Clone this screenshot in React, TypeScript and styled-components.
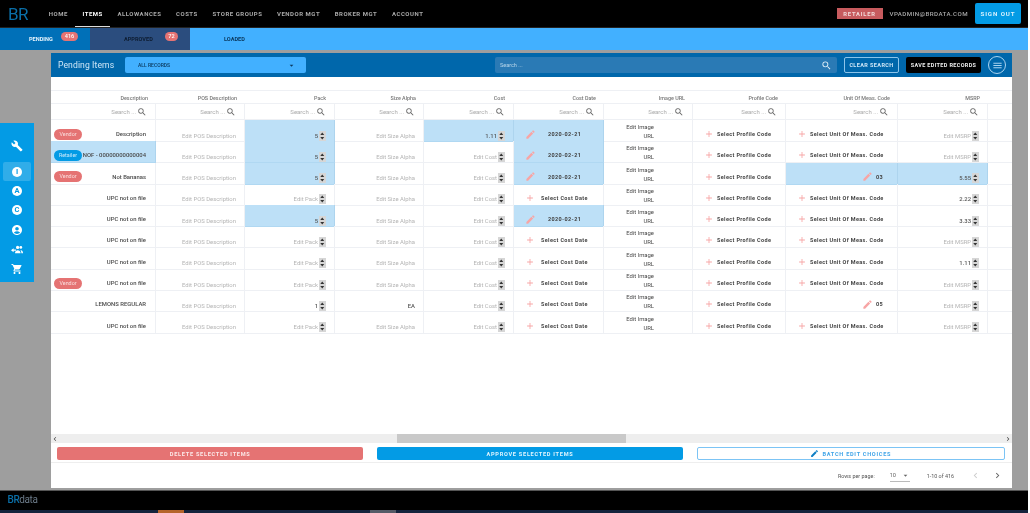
import React from "react";
import styled, { createGlobalStyle } from "styled-components";
import { MdBuild, MdAccountCircle, MdShoppingCart, MdSearch, MdEdit, MdAdd, MdArrowDropDown, MdChevronLeft, MdChevronRight, MdMenu } from "react-icons/md";

const Global = createGlobalStyle`
  html, body { margin: 0; padding: 0; background: #fff; }
  body { font-family: Roboto, "Liberation Sans", sans-serif; width: 1030px; height: 513px; overflow: hidden; }
  * { box-sizing: border-box; }
`;

const Shell = styled.div`
  width: 1028px;
  height: 513px;
  display: flex;
  flex-direction: column;
  background: #9e9e9e;
  filter: blur(0.3px);
`;

const TopBar = styled.header`
  height: 28px;
  flex: none;
  background: #000;
  display: flex;
  align-items: center;
  padding: 0 7px 0 8px;
  border-bottom: 1px solid #222;
`;
const Logo = styled.div`
  font-size: 17px;
  line-height: 20px;
  color: #0a6fa8;
  width: 33.5px;
  letter-spacing: -0.5px;
  font-weight: 400;
`;
const NavItem = styled.div<{ $active?: boolean }>`
  height: 27px;
  display: flex;
  align-items: center;
  padding: 0 7.3px;
  font-size: 6px;
  font-weight: 700;
  letter-spacing: 0.52px;
  white-space: nowrap;
  color: ${(p) => (p.$active ? "#fff" : "#a9a9a9")};
  box-shadow: ${(p) => (p.$active ? "inset 0 -1px 0 #ddd" : "none")};
`;
const Spacer = styled.div`
  flex: 1;
`;
const RoleTag = styled.div`
  width: 46px;
  height: 11px;
  background: #c75b5e;
  color: #f2dada;
  font-size: 5.8px;
  font-weight: 700;
  letter-spacing: 0.8px;
  display: flex;
  align-items: center;
  justify-content: center;
`;
const Email = styled.div`
  margin: 0 7px;
  font-size: 6.2px;
  font-weight: 500;
  letter-spacing: 0.4px;
  color: #a9a9a9;
`;
const SignOut = styled.button`
  width: 46px;
  height: 21px;
  border: 0;
  border-radius: 2px;
  padding: 0;
  background: #039be5;
  color: #d8f1fd;
  font-family: inherit;
  font-size: 6.2px;
  font-weight: 700;
  letter-spacing: 0.9px;
`;

const TabBar = styled.nav`
  height: 22px;
  flex: none;
  display: flex;
  background: #42b0ff;
`;
const Tab = styled.div<{ $w: number; $bg: string; $fg: string; $pad: number }>`
  position: relative;
  width: ${(p) => p.$w}px;
  background: ${(p) => p.$bg};
  color: ${(p) => p.$fg};
  padding-left: ${(p) => p.$pad}px;
  font-size: 5.6px;
  font-weight: 700;
  line-height: 22px;
`;
const TabCount = styled.span<{ $left: number; $w: number }>`
  position: absolute;
  top: 4px;
  left: ${(p) => p.$left}px;
  width: ${(p) => p.$w}px;
  height: 9px;
  border-radius: 5px;
  background: #e57373;
  color: #fff;
  font-size: 5.6px;
  font-weight: 500;
  line-height: 9px;
  text-align: center;
`;

const Main = styled.main`
  flex: 1;
  min-height: 0;
  display: flex;
  align-items: flex-start;
  padding: 3px 16px 2px 0;
`;
const SideBar = styled.aside`
  width: 34px;
  height: 159px;
  margin: 70px 17px 0 0;
  flex: none;
  background: #039be5;
  display: flex;
  flex-direction: column;
  align-items: center;
  padding-top: 13px;
  color: #fff;
`;
const SideItem = styled.div<{ $active?: boolean }>`
  width: 28px;
  height: 19.4px;
  flex: none;
  display: flex;
  align-items: center;
  justify-content: center;
  border-radius: 2px;
  background: ${(p) => (p.$active ? "rgba(255,255,255,.18)" : "transparent")};
`;
const SideTool = styled(SideItem)`
  margin-bottom: 6.5px;
`;
const LetterDot = styled.span`
  width: 10px;
  height: 10px;
  border-radius: 50%;
  background: #fff;
  color: #039be5;
  font-size: 7.5px;
  font-weight: 700;
  line-height: 10px;
  text-align: center;
`;

const Panel = styled.section`
  width: 961px;
  height: 435px;
  flex: none;
  background: #fff;
  display: flex;
  flex-direction: column;
`;
const PanelHead = styled.div`
  height: 24px;
  flex: none;
  background: #0067ab;
  display: flex;
  align-items: center;
  padding: 0 6px 0 7px;
`;
const Title = styled.h1`
  margin: 0;
  width: 67px;
  font-size: 8.6px;
  font-weight: 400;
  letter-spacing: 0.1px;
  color: #cfe7f7;
  white-space: nowrap;
`;
const RecordSelect = styled.div`
  width: 181px;
  height: 16px;
  background: #42b0ff;
  border-radius: 2px;
  display: flex;
  align-items: center;
  justify-content: space-between;
  padding: 0 10px 0 13px;
  font-size: 5px;
  font-weight: 500;
  color: #0b3a60;
`;
const GlobalSearch = styled.div`
  width: 342px;
  height: 16px;
  margin-left: 189px;
  background: #2a7ab5;
  border-radius: 2px;
  display: flex;
  align-items: center;
  justify-content: space-between;
  padding: 0 5px;
  font-size: 5.5px;
  color: #b8d6ea;
`;
const ClearBtn = styled.button`
  width: 55px;
  height: 16px;
  margin-left: 7px;
  padding: 0;
  background: transparent;
  border: 1px solid #8cc4ea;
  border-radius: 2px;
  color: #cfe7f7;
  font-family: inherit;
  font-size: 5.5px;
  font-weight: 700;
  letter-spacing: 0.4px;
`;
const SaveBtn = styled.button`
  width: 75px;
  height: 16px;
  margin-left: 7px;
  padding: 0;
  background: #000;
  border: 0;
  border-radius: 2px;
  color: #eee;
  font-family: inherit;
  font-size: 5.5px;
  font-weight: 700;
  letter-spacing: 0.35px;
`;
const MenuBtn = styled.div`
  width: 18px;
  height: 18px;
  margin-left: 7px;
  border: 1px solid #a9d3ef;
  border-radius: 50%;
  display: flex;
  align-items: center;
  justify-content: center;
  color: #a9d3ef;
`;

const TableArea = styled.div`
  flex: none;
  height: 357px;
  padding-top: 13px;
`;
const COLS = "105px 89px 90px 89px 90px 90px 89px 93px 112px 90px 24px";
const HeadRow = styled.div`
  display: grid;
  grid-template-columns: ${COLS};
  height: 14px;
  border-top: 1px solid #eef0f4;
  border-bottom: 1px solid #eef0f4;
`;
const HeadCell = styled.div<{ $pad: number }>`
  font-size: 5.4px;
  font-weight: 500;
  line-height: 14px;
  color: #777;
  text-align: right;
  padding-right: ${(p) => p.$pad}px;
  white-space: nowrap;
`;
const SearchRow = styled.div`
  display: grid;
  grid-template-columns: ${COLS};
  height: 16px;
  border-bottom: 1px solid #eef0f4;
`;
const SearchCell = styled.div`
  display: flex;
  align-items: center;
  justify-content: flex-end;
  gap: 1px;
  padding-right: 8px;
  font-size: 6px;
  color: #aaa;
  border-right: 1px solid #eef0f4;
  white-space: nowrap;
  svg { color: #666; }
  &:last-child { border-right: 0; }
`;
const DataRow = styled.div`
  display: grid;
  grid-template-columns: ${COLS};
  height: 21.3px;
`;
const Cell = styled.div<{ $hi?: boolean }>`
  display: flex;
  align-items: flex-end;
  justify-content: flex-end;
  padding-bottom: 0.5px;
  min-width: 0;
  background: ${(p) => (p.$hi ? "#bde0f7" : "transparent")};
  border-right: 1px solid ${(p) => (p.$hi ? "#add4ee" : "#eef0f4")};
  border-bottom: 1px solid ${(p) => (p.$hi ? "#b0d8f2" : "#eef0f4")};
  white-space: nowrap;
  &:last-child { border-right: 0; }
`;
const DescCell = styled(Cell)`
  justify-content: space-between;
  align-items: center;
  padding: 7px 9px 0 3px;
`;
const Badge = styled.span<{ $kind: "Vendor" | "Retailer" }>`
  flex: none;
  width: 28px;
  height: 11px;
  border-radius: 6px;
  background: ${(p) => (p.$kind === "Vendor" ? "#e57373" : "#039be5")};
  color: ${(p) => (p.$kind === "Vendor" ? "#f9dede" : "#cbeafb")};
  font-size: 5.4px;
  line-height: 11px;
  text-align: center;
`;
const DescText = styled.span`
  margin-left: auto;
  font-size: 5.9px;
  font-weight: 500;
  color: #4a4a4a;
`;
const Ghost = styled.span<{ $pad: number }>`
  font-size: 5.9px;
  color: #b4b4b4;
  padding-right: ${(p) => p.$pad}px;
  line-height: 9px;
`;
const Value = styled.span<{ $pad?: number }>`
  font-size: 5.9px;
  color: #555;
  font-weight: 500;
  padding-right: ${(p) => p.$pad ?? 0}px;
  line-height: 9px;
`;
const Spin = styled.svg`
  flex: none;
  width: 6.5px;
  height: 10px;
  margin: 0 8.5px 0 1px;
  background: #d6d6d6;
`;
const PickCell = styled(Cell)<{ $left: number }>`
  justify-content: flex-start;
  align-items: center;
  padding: 7px 0 0 ${(p) => p.$left}px;
  font-size: 5.5px;
  font-weight: 700;
  letter-spacing: 0.36px;
  color: #444;
  svg { color: #f7a5a5; flex: none; }
`;
const PickLabel = styled.span<{ $gap: number }>`
  margin-left: ${(p) => p.$gap}px;
`;
const ImageCell = styled(Cell)`
  display: block;
  padding: 3px 38px 0 0;
  font-size: 5.9px;
  line-height: 9px;
  color: #4a4a4a;
  text-align: right;
`;

const HScroll = styled.div`
  height: 9px;
  flex: none;
  background: #eee;
  display: flex;
  align-items: center;
  justify-content: space-between;
  color: #444;
`;
const Thumb = styled.div`
  width: 229px;
  height: 9px;
  margin-right: 40px;
  background: #c9c9c9;
`;
const ActionRow = styled.div`
  height: 20px;
  flex: none;
  display: flex;
  align-items: flex-start;
  gap: 13.5px;
  padding: 4px 7px 0 6px;
  border-bottom: 1px solid #eee;
`;
const ActionBtn = styled.button<{ $bg: string; $fg: string; $border?: string }>`
  flex: 1;
  height: 13px;
  padding: 0;
  border: ${(p) => (p.$border ? `1px solid ${p.$border}` : "0")};
  border-radius: 2px;
  background: ${(p) => p.$bg};
  color: ${(p) => p.$fg};
  font-family: inherit;
  font-size: 5.6px;
  font-weight: 700;
  letter-spacing: 0.72px;
  display: flex;
  align-items: center;
  justify-content: center;
  gap: 3px;
`;
const Pager = styled.div`
  flex: none;
  height: 25px;
  display: flex;
  align-items: center;
  justify-content: flex-end;
  padding: 0 9px 0 0;
  font-size: 5.4px;
  color: #555;
`;
const PageSize = styled.div`
  width: 20px;
  height: 13px;
  margin: 0 17px 0 15px;
  display: flex;
  align-items: center;
  justify-content: space-between;
  border-bottom: 1px solid #bbb;
  color: #666;
  font-size: 5.6px;
`;
const PageIcons = styled.div`
  display: flex;
  gap: 11px;
  margin-left: 16px;
`;

const Footer = styled.footer`
  height: 23px;
  flex: none;
  background: #000;
  display: flex;
  flex-direction: column;
  border-top: 1px solid #555;
`;
const FooterLogo = styled.div`
  flex: 1;
  padding: 3px 0 0 7.5px;
  font-size: 10px;
  line-height: 12px;
  letter-spacing: -0.4px;
  color: #6b7a88;
`;
const FooterBrand = styled.span`
  color: #0a6fa8;
  font-weight: 500;
`;
const Strip = styled.div`
  height: 3px;
  flex: none;
  background: #14233c;
  display: flex;
`;
const StripMark = styled.div<{ $at: number; $c: string }>`
  width: 26px;
  margin-left: ${(p) => p.$at}px;
  background: ${(p) => p.$c};
`;

const Spinner = () => (
  <Spin viewBox="0 0 6 10">
    <path d="M3 1.5 5 4H1z M3 8.5 1 6h4z" fill="#333" />
  </Spin>
);
const Pencil = () => <MdEdit size={11} />;
const Plus = () => <MdAdd size={10} />;

const heads: [string, number][] = [
  ["Description", 8], ["POS Description", 8], ["Pack", 9], ["Size Alpha", 8], ["Cost", 9],
  ["Cost Date", 8], ["Image URL", 8], ["Profile Code", 8], ["Unit Of Meas. Code", 8], ["MSRP", 8], ["", 0],
];

type Row = {
  badge?: "Vendor" | "Retailer"; desc: string; descHi?: boolean; pack?: string; packHi?: boolean; size?: string;
  cost?: string; costHi?: boolean; date?: boolean; uom?: string; uomHi?: boolean; msrp?: string; msrpHi?: boolean;
};
const UPC = "UPC not on file";
const rows: Row[] = [
  { badge: "Vendor", desc: "Description", pack: "5", packHi: true, cost: "1.11", costHi: true, date: true },
  { badge: "Retailer", desc: "NOF - 00000000000004", descHi: true, pack: "5", packHi: true, date: true },
  { badge: "Vendor", desc: "Not Bananas", pack: "5", packHi: true, date: true, uom: "03", uomHi: true, msrp: "5.55", msrpHi: true },
  { desc: UPC, msrp: "2.22" },
  { desc: UPC, pack: "5", packHi: true, date: true, msrp: "3.33" },
  { desc: UPC },
  { desc: UPC, msrp: "1.11" },
  { badge: "Vendor", desc: UPC },
  { desc: "LEMONS REGULAR", pack: "1", size: "EA", uom: "05" },
  { desc: UPC },
];

const Numeric = ({ value, hi, label }: { value?: string; hi?: boolean; label: string }) => (
  <Cell $hi={hi}>
    {value ? <Value>{value}</Value> : <Ghost $pad={0}>{label}</Ghost>}
    <Spinner />
  </Cell>
);

export default function App() {
  return (
    <Shell>
      <Global />
      <TopBar>
        <Logo>BR</Logo>
        {["HOME", "ITEMS", "ALLOWANCES", "COSTS", "STORE GROUPS", "VENDOR MGT", "BROKER MGT", "ACCOUNT"].map((n) => (
          <NavItem key={n} $active={n === "ITEMS"}>{n}</NavItem>
        ))}
        <Spacer />
        <RoleTag>RETAILER</RoleTag>
        <Email>VPADMIN@BRDATA.COM</Email>
        <SignOut>SIGN OUT</SignOut>
      </TopBar>
      <TabBar>
        <Tab $w={90} $bg="#0070b8" $fg="#e6f4fd" $pad={29}>PENDING<TabCount $left={61} $w={17}>416</TabCount></Tab>
        <Tab $w={100} $bg="#2b4d7e" $fg="#0d1c30" $pad={34}>APPROVED<TabCount $left={75} $w={13}>72</TabCount></Tab>
        <Tab $w={100} $bg="#42b0ff" $fg="#0b3a60" $pad={34}>LOADED</Tab>
      </TabBar>
      <Main>
        <SideBar>
          <SideTool><MdBuild size={12} /></SideTool>
          <SideItem $active><LetterDot>I</LetterDot></SideItem>
          <SideItem><LetterDot>A</LetterDot></SideItem>
          <SideItem><LetterDot>C</LetterDot></SideItem>
          <SideItem><MdAccountCircle size={12} /></SideItem>
          <SideItem>
            <svg width="12" height="9" viewBox="0 0 12 9" fill="#fff">
              <path d="M0 5.2 2.6 3.2V4.6H5V5.8H2.6V7.2z" />
              <circle cx="6.6" cy="2.4" r="1.6" />
              <circle cx="9.8" cy="2.4" r="1.4" />
              <path d="M4 8.2C4 6.4 5.4 5.2 6.8 5.2S9.6 6.4 9.6 8.2zM10 5.2C11 5.2 12 6.2 12 8.2H10.4C10.4 7 10.2 6 9.4 5.4z" />
            </svg>
          </SideItem>
          <SideItem><MdShoppingCart size={12} /></SideItem>
        </SideBar>
        <Panel>
          <PanelHead>
            <Title>Pending Items</Title>
            <RecordSelect>ALL RECORDS<MdArrowDropDown size={9} /></RecordSelect>
            <GlobalSearch>Search ...<MdSearch size={11} color="#e4f1fa" /></GlobalSearch>
            <ClearBtn>CLEAR SEARCH</ClearBtn>
            <SaveBtn>SAVE EDITED RECORDS</SaveBtn>
            <MenuBtn><MdMenu size={11} /></MenuBtn>
          </PanelHead>
          <TableArea>
            <HeadRow>
              {heads.map(([h, p], i) => <HeadCell key={i} $pad={p}>{h}</HeadCell>)}
            </HeadRow>
            <SearchRow>
              {heads.map(([h], i) => (
                <SearchCell key={i}>{h && <>Search ...<MdSearch size={10} /></>}</SearchCell>
              ))}
            </SearchRow>
            {rows.map((r, i) => (
              <DataRow key={i}>
                <DescCell $hi={r.descHi}>
                  {r.badge && <Badge $kind={r.badge}>{r.badge}</Badge>}
                  <DescText>{r.desc}</DescText>
                </DescCell>
                <Cell><Ghost $pad={8}>Edit POS Description</Ghost></Cell>
                <Numeric value={r.pack} hi={r.packHi} label="Edit Pack" />
                <Cell>{r.size ? <Value $pad={8}>{r.size}</Value> : <Ghost $pad={8}>Edit Size Alpha</Ghost>}</Cell>
                <Numeric value={r.cost} hi={r.costHi} label="Edit Cost" />
                <PickCell $hi={r.date} $left={11}>
                  {r.date ? <><Pencil /><PickLabel $gap={12}>2020-02-21</PickLabel></> : <><Plus /><PickLabel $gap={6}>Select Cost Date</PickLabel></>}
                </PickCell>
                <ImageCell>Edit Image<br />URL</ImageCell>
                <PickCell $left={11}><Plus /><PickLabel $gap={3}>Select Profile Code</PickLabel></PickCell>
                {r.uom ? (
                  <PickCell $hi={r.uomHi} $left={76}><Pencil /><PickLabel $gap={3}>{r.uom}</PickLabel></PickCell>
                ) : (
                  <PickCell $left={11}><Plus /><PickLabel $gap={3}>Select Unit Of Meas. Code</PickLabel></PickCell>
                )}
                <Numeric value={r.msrp} hi={r.msrpHi} label="Edit MSRP" />
                <Cell />
              </DataRow>
            ))}
          </TableArea>
          <HScroll>
            <MdChevronLeft size={8} />
            <Thumb />
            <MdChevronRight size={8} />
          </HScroll>
          <ActionRow>
            <ActionBtn $bg="#e57373" $fg="#fbe9e9">DELETE SELECTED ITEMS</ActionBtn>
            <ActionBtn $bg="#039be5" $fg="#e1f5fe">APPROVE SELECTED ITEMS</ActionBtn>
            <ActionBtn $bg="#fff" $fg="#42a5e8" $border="#7cc4f5"><MdEdit size={9} color="#0f7fc4" />BATCH EDIT CHOICES</ActionBtn>
          </ActionRow>
          <Pager>
            Rows per page:
            <PageSize>10<MdArrowDropDown size={9} /></PageSize>
            1-10 of 416
            <PageIcons>
              <MdChevronLeft size={11} color="#ccc" />
              <MdChevronRight size={11} color="#666" />
            </PageIcons>
          </Pager>
        </Panel>
      </Main>
      <Footer>
        <FooterLogo><FooterBrand>BR</FooterBrand>data</FooterLogo>
        <Strip>
          <StripMark $at={158} $c="#b5642a" />
          <StripMark $at={186} $c="#555a66" />
        </Strip>
      </Footer>
    </Shell>
  );
}
